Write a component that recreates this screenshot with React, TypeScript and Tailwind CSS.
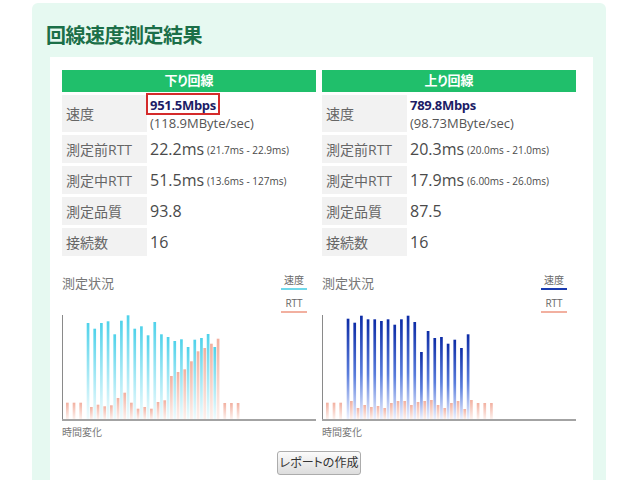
import React from "react";

type ChartProps = {
  id: string;
  speed: number[];
  rtt: number[];
  speedTop: string;
  speedMid: string;
  speedBottom: string;
};

const BAR_W = 2.7;
const STEP = 6.67;
const BASE = 106;

// RTT bar tops before/after the measuring window
const PRE = [89.7, 89.7, 89.7];
const POST = [90, 90, 90];

const Chart = ({ id, speed, rtt, speedTop, speedMid, speedBottom }: ChartProps) => {
  const n = speed.length;
  return (
    <svg width="254" height="108" className="block">
      <defs>
        <linearGradient id={`sp-${id}`} x1="0" y1="0" x2="0" y2="1">
          <stop offset="0" stopColor={speedTop} />
          <stop offset="0.55" stopColor={speedMid} />
          <stop offset="1" stopColor={speedBottom} />
        </linearGradient>
        <linearGradient id={`rt-${id}`} x1="0" y1="0" x2="0" y2="1">
          <stop offset="0" stopColor="#f2b0a0" />
          <stop offset="1" stopColor="#fdf1ed" />
        </linearGradient>
      </defs>

      {PRE.map((top, k) => (
        <rect key={`p${k}`} x={4 + STEP * k} y={top} width={BAR_W} height={BASE - top} fill={`url(#rt-${id})`} />
      ))}

      {speed.map((top, j) => (
        <rect key={`s${j}`} x={24.7 + STEP * j} y={top} width={BAR_W} height={BASE - top} fill={`url(#sp-${id})`} />
      ))}

      {rtt.map((top, j) => (
        <rect key={`r${j}`} x={28 + STEP * j} y={top} width={BAR_W} height={BASE - top} fill={`url(#rt-${id})`} />
      ))}

      {POST.map((top, m) => (
        <rect key={`q${m}`} x={28 + STEP * (n + m)} y={top} width={BAR_W} height={BASE - top} fill={`url(#rt-${id})`} />
      ))}

      <rect x="0" y="2" width="1" height="105" fill="#8a8a8a" />
      <rect x="0" y="106" width="254" height="2" fill="#a3a3a3" />
    </svg>
  );
};

type Side = {
  title: string;
  speed: string;
  bytes: string;
  before: string;
  beforeRange: string;
  during: string;
  duringRange: string;
  quality: string;
  conns: string;
  marked?: boolean;
  legendColor: string;
  chart: ChartProps;
};

const Row = ({ label, children, tall }: { label: string; children: React.ReactNode; tall?: boolean }) => (
  <div className={`flex ${tall ? "h-[37px]" : "h-[28px]"}`}>
    <div className="w-[85px] shrink-0 bg-[#f2f2f2] pl-[4px] flex items-center text-[14px] text-[#666]">
      {label}
    </div>
    <div className="flex-1 pl-[3px] flex items-center text-[#4a4a4a]">{children}</div>
  </div>
);

const Column = ({ side }: { side: Side }) => (
  <div className="w-[254px] flex flex-col">
    <div className="flex flex-col gap-[3px]">
      <div className="h-[22px] bg-[#20bf6b] text-white font-bold text-[13px] flex items-center justify-center [font-feature-settings:'palt']">
        {side.title}
      </div>

      <Row label="速度" tall>
        <div className="flex flex-col">
          <span className="relative self-start text-[13px] leading-[18px] font-bold tracking-[-0.3px] text-[#1c1c66]">
            {side.speed}
            {side.marked && (
              <span className="absolute -left-[4px] -right-[4px] -top-[3px] -bottom-[1px] border-2 border-[#d42b2b]" />
            )}
          </span>
          <span className="text-[13px] leading-[18px] text-[#555]">{side.bytes}</span>
        </div>
      </Row>

      <Row label="測定前RTT">
        <span className="text-[16px]">{side.before}</span>
        <span className="text-[10px] ml-[3px] mt-[2px]">{side.beforeRange}</span>
      </Row>

      <Row label="測定中RTT">
        <span className="text-[16px]">{side.during}</span>
        <span className="text-[10px] ml-[3px] mt-[2px]">{side.duringRange}</span>
      </Row>

      <Row label="測定品質">
        <span className="text-[16px]">{side.quality}</span>
      </Row>

      <Row label="接続数">
        <span className="text-[16px]">{side.conns}</span>
      </Row>
    </div>

    <div className="mt-[18px] flex justify-between items-start pr-[9px]">
      <span className="mt-[1px] text-[13px] leading-[16px] text-[#777]">測定状況</span>
      <div className="w-[26px] flex flex-col items-center text-[10px] leading-[12px] text-[#666]">
        <span>速度</span>
        <span className="mt-[2px] h-[2px] w-full" style={{ backgroundColor: side.legendColor }} />
        <span className="mt-[7px]">RTT</span>
        <span className="mt-[2px] h-[2px] w-full bg-[#f2b0a0]" />
      </div>
    </div>

    <Chart {...side.chart} />

    <span className="mt-[5px] text-[10px] leading-[12px] text-[#777]">時間変化</span>
  </div>
);

const down: Side = {
  title: "下り回線",
  speed: "951.5Mbps",
  bytes: "(118.9MByte/sec)",
  before: "22.2ms",
  beforeRange: "(21.7ms - 22.9ms)",
  during: "51.5ms",
  duringRange: "(13.6ms - 127ms)",
  quality: "93.8",
  conns: "16",
  marked: true,
  legendColor: "#6fd8ea",
  chart: {
    id: "down",
    speedTop: "#4fd2ea",
    speedMid: "#a9e9f5",
    speedBottom: "#f1fbfd",
    speed: [10, 15.7, 10, 8.3, 21.3, 7.7, 2.3, 15.7, 13.3, 22.3, 9, 21.3, 24, 28, 26.3, 34, 26.7, 25, 21, 34],
    rtt: [94, 91.7, 93.3, 92.3, 85, 79.7, 89.7, 95.7, 94, 95.7, 89, 87.3, 63, 59, 56.3, 48.3, 38.3, 35, 30.7, 25.7],
  },
};

const up: Side = {
  title: "上り回線",
  speed: "789.8Mbps",
  bytes: "(98.73MByte/sec)",
  before: "20.3ms",
  beforeRange: "(20.0ms - 21.0ms)",
  during: "17.9ms",
  duringRange: "(6.00ms - 26.0ms)",
  quality: "87.5",
  conns: "16",
  legendColor: "#1a3bb0",
  chart: {
    id: "up",
    speedTop: "#0d2ca6",
    speedMid: "#5a7ddc",
    speedBottom: "#eef2ff",
    speed: [5.7, 9.7, 2.7, 6.3, 6.3, 8, 6.3, 11.7, 6.3, 2.7, 9, 39, 18, 25, 24, 30.7, 26.7, 35, 21.3],
    rtt: [88, 95, 92, 94, 93, 95, 90, 88, 88, 92, 89, 88, 87, 92, 95, 90, 88, 96, 87],
  },
};

export default function App() {
  return (
    <div className="w-[640px] h-[480px] overflow-hidden bg-white font-['Open_Sans','Noto_Sans_CJK_JP',sans-serif]">
      <div className="ml-[32px] mt-[3px] w-[574px] h-[477px] rounded-t-[6px] bg-[#e6f9f1] pt-[19px]">
        <h1 className="pl-[14px] text-[20px] leading-[28px] font-bold text-[#1b6f48] tracking-[-0.5px]">
          回線速度測定結果
        </h1>

        <div className="mt-[7px] ml-[18px] w-[543px] h-[430px] bg-white pt-[13px] pl-[12px]">
          <div className="flex gap-[6px]">
            <Column side={down} />
            <Column side={up} />
          </div>

          <div className="w-[514px] flex justify-center mt-[13px]">
            <button className="h-[24px] w-[84px] rounded-[3px] border border-[#acacac] bg-gradient-to-b from-[#fbfbfb] to-[#dddddd] text-[12px] text-[#333] [font-feature-settings:'palt']">
              レポートの作成
            </button>
          </div>
        </div>
      </div>
    </div>
  );
}
